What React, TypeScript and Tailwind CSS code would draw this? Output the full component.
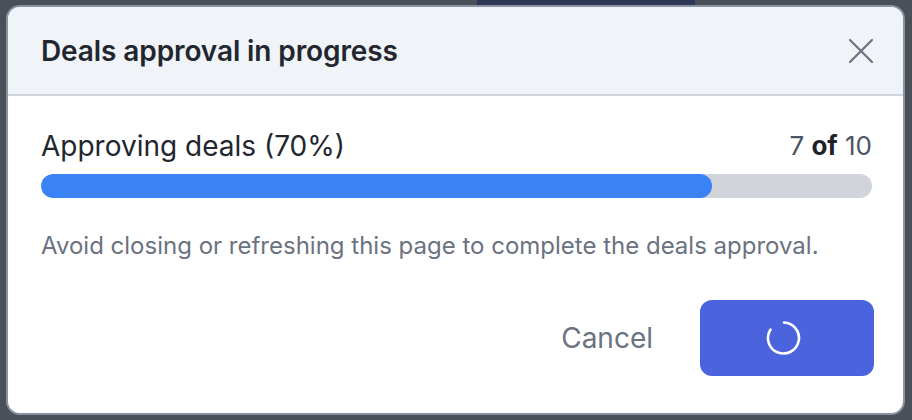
import React from "react";

const done = 7;
const total = 10;

function Spinner() {
  // white ring with a small gap near the top-left
  return (
    <svg width="36" height="36" viewBox="0 0 36 36" fill="none" className="mr-[8px]">
      <path
        d="M19 2.5 A15.5 15.5 0 1 1 5.5 9.5"
        stroke="white"
        strokeWidth="2.6"
        strokeLinecap="round"
      />
    </svg>
  );
}

function CloseIcon() {
  return (
    <svg width="26" height="26" viewBox="0 0 26 26" fill="none">
      <path d="M2 2 L24 24 M24 2 L2 24" stroke="#6b7280" strokeWidth="2.2" strokeLinecap="round" />
    </svg>
  );
}

export default function App() {
  return (
    <div
      className="relative h-[420px] w-[912px] overflow-hidden bg-[#4b5058] pl-[6px] pt-[5px]"
      style={{ fontFamily: "Inter, 'Noto Sans', sans-serif" }}
    >
      {/* page behind the modal */}
      <div className="absolute left-[477px] top-0 h-[6px] w-[218px] bg-[#2e3658]" />

      <div className="relative flex h-[410px] w-[899px] flex-col overflow-hidden rounded-[14px] border-2 border-[#8a93a1] bg-white">
        <div className="flex h-[89px] shrink-0 items-center justify-between border-b-2 border-[#d1d5db] bg-[#f0f3f8] pl-[33px] pr-[29px]">
          <h2 className="text-[28px] font-semibold tracking-[-0.1px] text-[#22262e]">
            Deals approval in progress
          </h2>
          <button className="flex h-[26px] w-[26px] items-center justify-center">
            <CloseIcon />
          </button>
        </div>

        <div className="flex flex-1 flex-col pl-[33px] pr-[31px]">
          <div className="mt-[33px] flex items-center justify-between text-[28px] leading-[34px] text-[#22262e]">
            <span>Approving deals (70%)</span>
            <span className="text-[26px] text-[#4b5563]">
              {done} <b className="font-bold text-[#1f2329]">of</b> {total}
            </span>
          </div>

          <div className="mt-[11px] h-[24px] w-full overflow-hidden rounded-full bg-[#d1d5db]">
            <div className="h-full rounded-full bg-[#3b82f6]" style={{ width: "80.7%" }} />
          </div>

          <p className="mt-[33px] text-[24px] leading-[30px] text-[#6b7280]">
            Avoid closing or refreshing this page to complete the deals approval.
          </p>

          <div className="mt-[39px] flex items-center justify-end gap-[47px]">
            <button className="text-[28px] text-[#6b7280]">Cancel</button>
            <button className="-mr-[2px] flex h-[76px] w-[174px] items-center justify-center rounded-[12px] bg-[#4b63dd]">
              <Spinner />
            </button>
          </div>
        </div>
      </div>
    </div>
  );
}
